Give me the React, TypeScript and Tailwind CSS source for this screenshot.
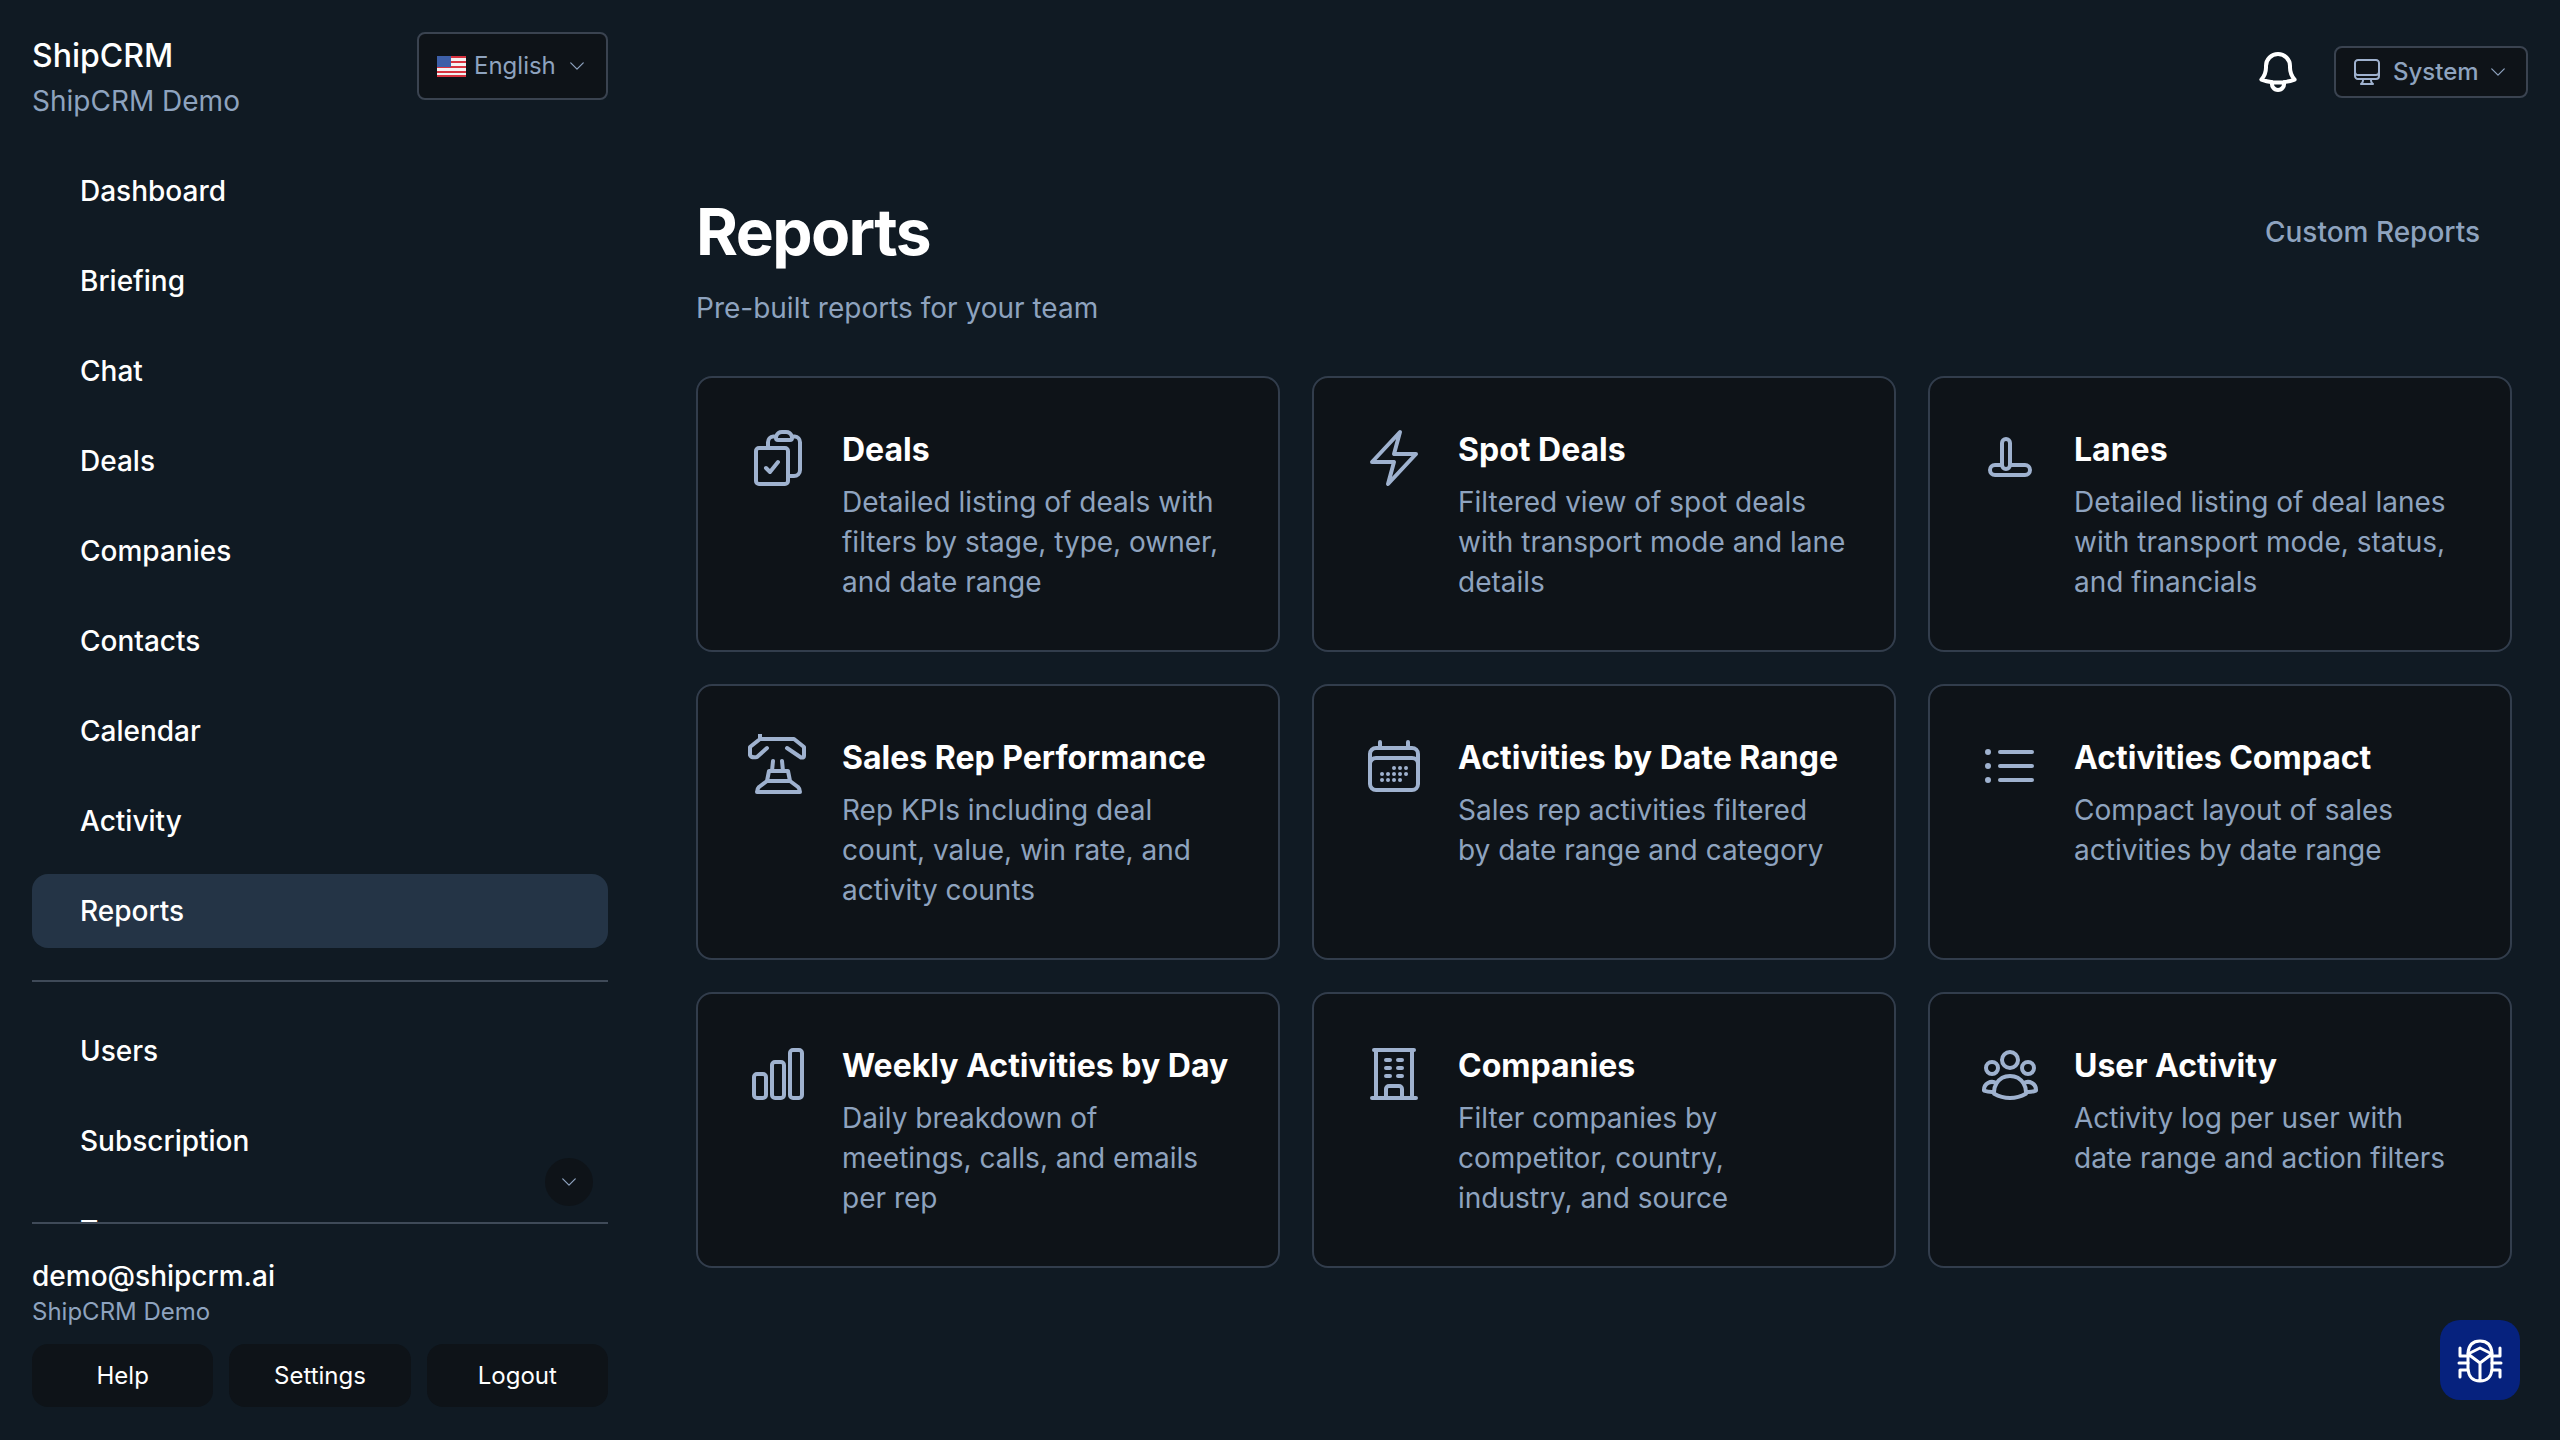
import {
  HiOutlineBell,
  HiOutlineBolt,
  HiOutlineBuildingOffice,
  HiOutlineCalendarDays,
  HiOutlineChartBar,
  HiOutlineChevronDown,
  HiOutlineClipboardDocumentCheck,
  HiOutlineComputerDesktop,
  HiOutlineListBullet,
  HiOutlineUserGroup,
} from 'react-icons/hi2'

function LanesIcon() {
  return (
    <svg viewBox="0 0 64 64" fill="none" stroke="currentColor" strokeWidth="4" className="w-16 h-16">
      <rect x="12" y="39" width="40" height="10" rx="5" />
      <rect x="24" y="13" width="8" height="30" rx="4" fill="#0e1318" />
    </svg>
  )
}

function PhoneIcon() {
  return (
    <svg viewBox="0 0 64 64" fill="none" stroke="currentColor" strokeWidth="4" strokeLinecap="round" strokeLinejoin="round" className="w-16 h-16">
      <path d="M14 0v5M14 5h34l10 8v9q0 2-3 1.500L41 14M14 5 4 13v8q1 3 7 2l10-9" />
      <path d="m27 27-1 10M36 27l1 10" />
      <path d="M23 37h19l2 10H21zM21 47l-8 6q-2 2-2 5h43q0-3-2-5l-8-6" />
    </svg>
  )
}

function BeetleIcon() {
  return (
    <svg viewBox="0 0 80 80" fill="none" stroke="currentColor" strokeWidth="3" strokeLinecap="round" strokeLinejoin="round" className="w-20 h-20">
      <path d="M28 33q1-12 12-12t12 12" />
      <path d="M28 34v15q1 12 12 12t12-12V34l-12 9zM28 34l12-6 12 6M40 43v18" />
      <path d="M20 28v8h8M60 28v8h-8M19 43h9M61 43h-9M28 50h-8v7M52 50h8v7" />
    </svg>
  )
}

function FlagIcon() {
  return (
    <svg viewBox="0 0 29 21" className="w-[29px] h-[21px]">
      <rect width="29" height="21" y="0" fill="#f3f1f1" rx="1" />
      <path d="M0 1h29M0 6h29M0 11h29M0 16h29M0 20h29" stroke="#d8323f" strokeWidth="2.200" />
      <rect width="14" height="11" fill="#3d5fa8" />
    </svg>
  )
}

const navTop = ['Dashboard', 'Briefing', 'Chat', 'Deals', 'Companies', 'Contacts', 'Calendar', 'Activity']
const navBottom = ['Users', 'Subscription', 'Team']

const reports = [
  { title: 'Deals', text: 'Detailed listing of deals with filters by stage, type, owner, and date range', icon: <HiOutlineClipboardDocumentCheck className="w-16 h-16" /> },
  { title: 'Spot Deals', text: 'Filtered view of spot deals with transport mode and lane details', icon: <HiOutlineBolt className="w-16 h-16" /> },
  { title: 'Lanes', text: 'Detailed listing of deal lanes with transport mode, status, and financials', icon: <LanesIcon /> },
  { title: 'Sales Rep Performance', text: 'Rep KPIs including deal count, value, win rate, and activity counts', icon: <PhoneIcon /> },
  { title: 'Activities by Date Range', text: 'Sales rep activities filtered by date range and category', icon: <HiOutlineCalendarDays className="w-16 h-16" /> },
  { title: 'Activities Compact', text: 'Compact layout of sales activities by date range', icon: <HiOutlineListBullet className="w-16 h-16" /> },
  { title: 'Weekly Activities by Day', text: 'Daily breakdown of meetings, calls, and emails per rep', icon: <HiOutlineChartBar className="w-16 h-16" /> },
  { title: 'Companies', text: 'Filter companies by competitor, country, industry, and source', icon: <HiOutlineBuildingOffice className="w-16 h-16" /> },
  { title: 'User Activity', text: 'Activity log per user with date range and action filters', icon: <HiOutlineUserGroup className="w-16 h-16" /> },
]

function NavItem({ label, active }: { label: string; active?: boolean }) {
  return (
    <div
      className={`flex items-center h-[74px] shrink-0 pl-12 rounded-2xl text-[28px] leading-10 font-medium text-white ${
        active ? 'bg-[#243446]' : ''
      }`}
    >
      {label}
    </div>
  )
}

export default function App() {
  return (
    <div className="relative flex w-[2560px] h-[1440px] overflow-hidden bg-[#101a23] font-[Inter,sans-serif] antialiased">
      <aside className="flex flex-col w-[640px] h-full shrink-0 px-8">
        <div className="flex items-start justify-between pt-[30px]">
          <div>
            <div className="text-[32px] leading-[52px] font-medium text-white">ShipCRM</div>
            <div className="-mt-px text-[28px] leading-10 text-[#8ea3bf]">ShipCRM Demo</div>
          </div>
          <button className="flex items-center gap-2 w-[191px] h-[68px] mt-[2px] -ml-px pl-[18px] rounded-lg border-2 border-[#3a4350] bg-[#0e1318] text-[24px] text-[#8ea3bf]">
            <FlagIcon />
            <span>English</span>
            <HiOutlineChevronDown className="w-5 h-5 ml-[3px]" />
          </button>
        </div>

        <div className="relative mt-[33px] h-[1068px] shrink-0">
          <nav className="h-full overflow-hidden flex flex-col">
            <div className="flex flex-col gap-4">
              {navTop.map((item) => (
                <NavItem key={item} label={item} />
              ))}
              <NavItem label="Reports" active />
            </div>
            <div className="h-0.5 shrink-0 my-8 bg-[#3f4a58]" />
            <div className="flex flex-col gap-4">
              {navBottom.map((item) => (
                <NavItem key={item} label={item} />
              ))}
            </div>
          </nav>
          <div className="absolute right-[15px] bottom-[16px] flex items-center justify-center w-12 h-12 rounded-full bg-[#0e1318] text-[#8ea3bf]">
            <HiOutlineChevronDown className="w-5 h-5" />
          </div>
        </div>

        <div className="border-t-2 border-[#3f4a58] pt-8">
          <div className="text-[28px] leading-10 font-medium text-white">demo@shipcrm.ai</div>
          <div className="text-[24px] leading-8 text-[#8ea3bf]">ShipCRM Demo</div>
          <div className="grid grid-cols-3 gap-4 mt-4">
            {['Help', 'Settings', 'Logout'].map((label) => (
              <button key={label} className="h-[63px] rounded-2xl bg-[#0e1318] text-[24px] text-white">
                {label}
              </button>
            ))}
          </div>
        </div>
      </aside>

      <main className="flex-1 min-w-0 flex flex-col">
        <header className="flex items-center justify-end gap-8 pt-[46px] pr-8">
          <HiOutlineBell className="w-12 h-12 text-white [stroke-width:2]" />
          <button className="flex items-center gap-[10px] w-[194px] h-[52px] pl-[15px] rounded-lg border-2 border-[#3a4350] bg-[#0e1318] text-[24px] font-medium text-[#8ea3bf]">
            <HiOutlineComputerDesktop className="w-8 h-8 text-[#9fb2cf]" />
            <span>System</span>
            <HiOutlineChevronDown className="w-5 h-5 -ml-px" />
          </button>
        </header>

        <div className="pl-14 pr-12">
          <div className="flex items-center justify-between mt-[98px]">
            <h1 className="text-[64px] leading-[72px] font-bold tracking-tight text-white">Reports</h1>
            <button className="pr-8 text-[28px] leading-10 font-medium text-[#8ea3bf]">Custom Reports</button>
          </div>
          <p className="mt-5 text-[28px] leading-10 text-[#8ea3bf]">Pre-built reports for your team</p>

          <div className="grid grid-cols-3 gap-8 mt-[48px]">
            {reports.map((r) => (
              <div key={r.title} className="flex gap-8 h-[276px] p-12 rounded-2xl border-2 border-[#323d4c] bg-[#0e1318]">
                <div className="w-16 h-16 shrink-0 text-[#9fb2cf]">{r.icon}</div>
                <div className="min-w-0">
                  <h3 className="text-[32px] leading-12 font-bold text-white">{r.title}</h3>
                  <p className="mt-2 text-[28px] leading-10 text-[#8ea3bf]">{r.text}</p>
                </div>
              </div>
            ))}
          </div>
        </div>
      </main>

      <button className="absolute right-10 bottom-10 flex items-center justify-center w-20 h-20 rounded-[20px] bg-[#06227e] text-white">
        <BeetleIcon />
      </button>
    </div>
  )
}
